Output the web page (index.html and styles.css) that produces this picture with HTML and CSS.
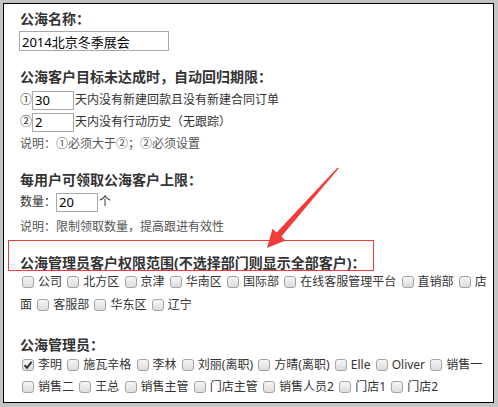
FILE: index.html
```html
<!doctype html>
<html lang="zh-CN">
<head>
    <meta charset="UTF-8">
    <title>公海设置</title>
    <link rel="stylesheet" href="styles.css">
</head>
<body>
    <div class="shot">
        <div class="page">
            <div class="form">
                <div class="field">
                    <h3 class="label">公海名称：</h3>
                    <input class="text name" type="text" value="2014北京冬季展会">
                </div>

                <div class="field">
                    <h3 class="label">公海客户目标未达成时，自动回归期限：</h3>
                    <div class="rows">
                        <div class="row">①<input class="text num" type="text" value="30">天内没有新建回款且没有新建合同订单</div>
                        <div class="row">②<input class="text num" type="text" value="2">天内没有行动历史（无跟踪）</div>
                    </div>
                    <p class="note">说明：①必须大于②；②必须设置</p>
                </div>

                <div class="field">
                    <h3 class="label">每用户可领取公海客户上限：</h3>
                    <div class="row single">数量：<input class="text num" type="text" value="20">个</div>
                    <p class="note low">说明：限制领取数量，提高跟进有效性</p>
                </div>

                <div class="field">
                    <h3 class="label">公海管理员客户权限范围(不选择部门则显示全部客户)：</h3>
                    <div class="checks depts">
                        <label><input type="checkbox"> 公司</label>
                        <label><input type="checkbox"> 北方区</label>
                        <label><input type="checkbox"> 京津</label>
                        <label><input type="checkbox"> 华南区</label>
                        <label><input type="checkbox"> 国际部</label>
                        <label><input type="checkbox"> 在线客服管理平台</label>
                        <label><input type="checkbox"> 直销部</label>
                        <label><input type="checkbox"> 店面</label>
                        <label><input type="checkbox"> 客服部</label>
                        <label><input type="checkbox"> 华东区</label>
                        <label><input type="checkbox"> 辽宁</label>
                    </div>
                </div>

                <div class="field admin">
                    <h3 class="label">公海管理员：</h3>
                    <div class="checks admins">
                        <label><input type="checkbox" checked> 李明</label>
                        <label><input type="checkbox"> 施瓦辛格</label>
                        <label><input type="checkbox"> 李林</label>
                        <label><input type="checkbox"> 刘丽(离职)</label>
                        <label><input type="checkbox"> 方晴(离职)</label>
                        <label><input type="checkbox"> Elle</label>
                        <label><input type="checkbox"> Oliver</label>
                        <label><input type="checkbox"> 销售一</label>
                        <label><input type="checkbox"> 销售二</label>
                        <label><input type="checkbox"> 王总</label>
                        <label><input type="checkbox"> 销售主管</label>
                        <label><input type="checkbox"> 门店主管</label>
                        <label><input type="checkbox"> 销售人员2</label>
                        <label><input type="checkbox"> 门店1</label>
                        <label><input type="checkbox"> 门店2</label>
                        <label><input type="checkbox"> 客服主管</label>
                        <label><input type="checkbox"> 在线客服管理平台管理员</label>
                        <label><input type="checkbox"> 客服专员1</label>
                        <label><input type="checkbox"> 客服专员2</label>
                    </div>
                </div>
            </div>
        </div>

        <!-- 标注 -->
        <div class="mark-box"></div>
        <svg class="mark-arrow" width="498" height="407" viewBox="0 0 498 407">
            <polygon points="338.6,168.4 281.4,236.6 285.5,240.5 267,248 272.5,228.8 276.6,232.4 337.6,167.6"></polygon>
        </svg>
    </div>
</body>
</html>
```

FILE: styles.css
```css
html,
body {
    margin: 0;
    padding: 0;
}

body {
    background: #c4c4c4;
    font-family: "Noto Sans", "Noto Sans CJK SC", sans-serif;
    font-size: 12px;
    color: #333;
}

.shot {
    position: relative;
    width: 498px;
    height: 407px;
    padding: 3px 4px 4px 3px;
    box-sizing: border-box;
}

.page {
    height: 400px;
    border: 1px solid #000;
    background: #fff;
    overflow: hidden;
    box-sizing: border-box;
}

.form {
    padding: 5px 6px 0 16px;
}

.field + .field {
    margin-top: 16px;
}

.field.admin {
    margin-top: 19px;
}

.label {
    margin: 0;
    font-size: 14px;
    font-weight: bold;
    line-height: 20px;
    color: #333;
}

.text {
    display: block;
    box-sizing: border-box;
    border: 1px solid #a9a9a9;
    padding: 0 2px;
    font-family: "Noto Sans", "Noto Sans CJK SC", sans-serif;
    font-size: 12px;
    color: #000;
    outline: none;
}

.name {
    width: 150px;
    height: 20px;
    margin: 2px 0 0 -1px;
    font-size: 13px;
}

.rows {
    padding-top: 2px;
}

.row {
    display: flex;
    align-items: center;
    height: 22px;
    line-height: 22px;
}

.row.single {
    margin-top: 1px;
}

.num {
    width: 42px;
    height: 19px;
    margin: 0 1px 0 0;
    font-size: 13px;
}

.note {
    margin: 1px 0 0;
    line-height: 20px;
    color: #555;
}

.note.low {
    margin-top: 4px;
}

.checks {
    margin-top: -3px;
    line-height: 23px;
}

.admins {
    margin-top: -1px;
    line-height: 22px;
}

.admins label {
    white-space: nowrap;
}

.checks input {
    appearance: none;
    -webkit-appearance: none;
    width: 12px;
    height: 12px;
    margin: 0 1px 0 2px;
    border: 1px solid #a3a3a3;
    border-radius: 3px;
    background: linear-gradient(#f6f6f6, #dcdcdc);
    vertical-align: -2px;
    box-sizing: border-box;
}

.checks input:checked {
    background: url("data:image/svg+xml;utf8,<svg xmlns='http://www.w3.org/2000/svg' width='10' height='10'><path d='M1.5 5.2 L4 7.8 L8.6 1.8' fill='none' stroke='%23333' stroke-width='2'/></svg>") center no-repeat, linear-gradient(#f6f6f6, #dcdcdc);
}

.mark-box {
    position: absolute;
    left: 8px;
    top: 240px;
    width: 366px;
    height: 31px;
    border: 1px solid #ee3b3b;
    box-sizing: border-box;
}

.mark-arrow {
    position: absolute;
    left: 0;
    top: 0;
    pointer-events: none;
}

.mark-arrow polygon {
    fill: #f23c3c;
}
```
